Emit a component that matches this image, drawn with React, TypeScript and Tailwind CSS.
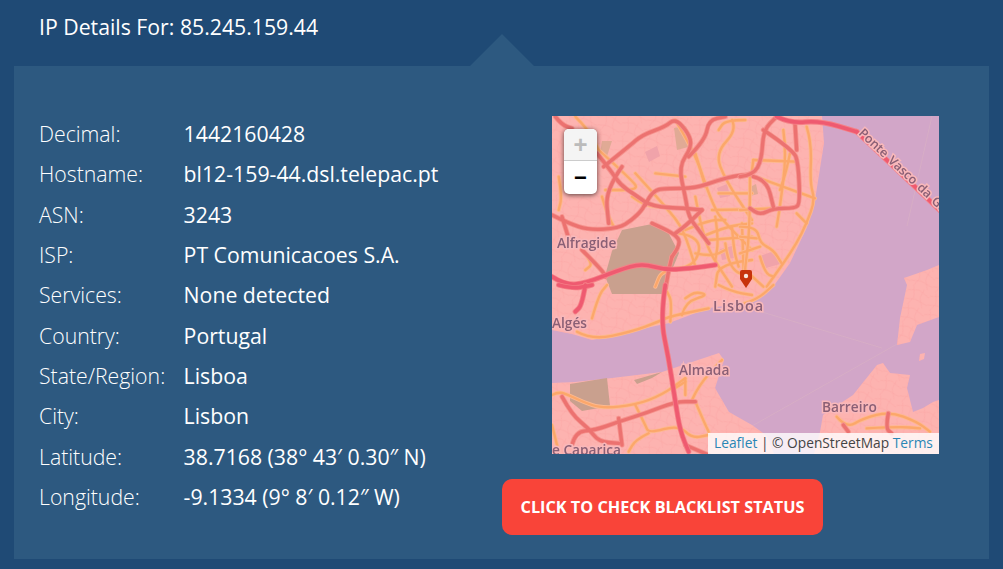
const rows = [
  ['Decimal:', '1442160428'],
  ['Hostname:', 'bl12-159-44.dsl.telepac.pt'],
  ['ASN:', '3243'],
  ['ISP:', 'PT Comunicacoes S.A.'],
  ['Services:', 'None detected'],
  ['Country:', 'Portugal'],
  ['State/Region:', 'Lisboa'],
  ['City:', 'Lisbon'],
  ['Latitude:', '38.7168 (38° 43′ 0.30″ N)'],
  ['Longitude:', '-9.1334 (9° 8′ 0.12″ W)'],
];

// turns a list of points into a rounded line
function smooth(p: number[][]) {
  let d = `M${p[0][0]} ${p[0][1]}`;
  for (let i = 1; i < p.length - 1; i++) {
    const mx = (p[i][0] + p[i + 1][0]) / 2;
    const my = (p[i][1] + p[i + 1][1]) / 2;
    d += `Q${p[i][0]} ${p[i][1]} ${mx} ${my}`;
  }
  const last = p[p.length - 1];
  return d + `L${last[0]} ${last[1]}`;
}

type Roads = number[][][];

function RoadLayer({ roads, color, casing, width }: { roads: Roads; color: string; casing: string; width: number }) {
  return (
    <>
      {roads.map((r, i) => (
        <path key={'c' + i} d={smooth(r)} fill="none" stroke={casing} strokeWidth={width + 5} strokeLinecap="round" strokeLinejoin="round" />
      ))}
      {roads.map((r, i) => (
        <path key={i} d={smooth(r)} fill="none" stroke={color} strokeWidth={width} strokeLinecap="round" strokeLinejoin="round" />
      ))}
    </>
  );
}

function Quarter({ x, y, orange, red, pink }: { x: number; y: number; orange: Roads; red: Roads; pink: Roads }) {
  return (
    <g transform={`translate(${x},${y}) scale(0.3333)`}>
      <RoadLayer roads={orange} color="#fca76a" casing="#fdb98f" width={7} />
      <RoadLayer roads={red} color="#ec7270" casing="#f6938e" width={10} />
      <RoadLayer roads={pink} color="#ef5a70" casing="#f57f86" width={11} />
    </g>
  );
}

// road lists are in the 3x scale of each map quarter
const orangeNW: Roads = [
  [[430, 130], [480, 290], [530, 350], [600, 420]],
  [[540, 30], [555, 60], [490, 130], [520, 210], [600, 330]],
  [[450, 380], [520, 350], [600, 340]],
  [[480, 300], [600, 298]],
  [[430, 260], [445, 340], [470, 420], [500, 470], [540, 530]],
  [[140, 120], [240, 210], [260, 240], [160, 240]],
  [[310, 190], [400, 200]],
  [[250, 190], [350, 300], [395, 360], [430, 470]],
  [[380, 370], [450, 380], [430, 470], [330, 480], [310, 530]],
  [[600, 450], [500, 460], [490, 530]],
  [[570, 340], [575, 480]],
  [[90, 420], [125, 460], [100, 480]],
  [[20, 200], [30, 260], [20, 300]],
  [[240, 260], [280, 290], [350, 290]],
  [[70, 20], [110, 60], [140, 120]],
  [[370, 30], [430, 130], [460, 230]],
  [[400, 360], [470, 330], [520, 330]],
  [[470, 390], [600, 380]],
  [[500, 250], [600, 250]],
  [[150, 260], [165, 310], [185, 350]],
  [[520, 400], [530, 480], [600, 500]],
  [[430, 430], [480, 440], [520, 420]],
  [[580, 30], [520, 30], [500, 60]],
  [[540, 350], [545, 420], [560, 470]],
  [[490, 320], [500, 390], [490, 450]],
];
const redNW: Roads = [
  [[10, 20], [30, 45], [60, 55]],
  [[135, 130], [175, 180], [205, 225], [250, 255], [300, 290], [400, 295], [450, 300]],
  [[155, 170], [230, 110], [270, 75], [340, 50], [370, 25], [410, 70], [420, 110], [380, 170], [400, 260], [410, 320], [440, 360], [470, 400]],
  [[410, 140], [460, 90], [470, 30], [520, 20]],
  [[280, 285], [300, 240], [350, 235], [430, 235], [500, 210], [560, 195], [600, 195]],
  [[0, 315], [50, 340], [110, 360], [200, 355], [240, 330], [270, 300], [280, 280]],
  [[30, 320], [50, 385]],
  [[90, 420], [150, 480], [160, 500]],
  [[210, 170], [160, 240], [170, 340]],
  [[360, 440], [390, 400], [365, 370], [300, 340]],
  [[340, 540], [350, 480], [360, 440]],
  [[450, 300], [410, 340], [370, 370]],
];
const pinkNW: Roads = [[[0, 500], [40, 525], [100, 520], [200, 480], [270, 460], [340, 480], [420, 475], [490, 465]]];

const orangeNE: Roads = [
  [[40, 150], [170, 155]],
  [[30, 200], [30, 350], [15, 480]],
  [[60, 205], [225, 265]],
  [[200, 50], [215, 100], [210, 220], [225, 270], [200, 340], [170, 400], [130, 460], [80, 530]],
  [[170, 310], [200, 340]],
  [[130, 60], [140, 130], [120, 290], [110, 350]],
  [[0, 350], [50, 350], [60, 400], [100, 420], [125, 460]],
  [[0, 380], [50, 385]],
  [[0, 300], [100, 295]],
  [[60, 440], [75, 490], [100, 500]],
  [[150, 130], [140, 180], [120, 240]],
  [[0, 430], [60, 410]],
  [[15, 480], [70, 530]],
  [[40, 150], [35, 190]],
];
const redNE: Roads = [
  [[0, 200], [40, 195], [65, 150], [70, 60], [110, 20]],
  [[70, 60], [160, 120], [175, 160], [180, 280], [165, 295], [100, 295], [60, 315], [30, 295]],
  [[40, 200], [80, 210], [100, 290]],
  [[165, 40], [170, 120]],
];
const pinkNE: Roads = [
  [[110, 20], [150, 40], [240, 32], [350, 65]],
  [[350, 65], [620, 320]],
];

const orangeSW: Roads = [
  [[0, 330], [20, 320], [50, 330], [90, 350], [150, 370], [250, 360], [330, 330], [400, 280]],
  [[360, 315], [400, 290]],
  [[250, 360], [280, 420], [290, 445], [380, 420], [420, 460], [470, 450]],
  [[430, 350], [460, 420], [470, 440]],
  [[420, 345], [440, 300], [510, 225]],
  [[400, 330], [400, 280]],
  [[75, 140], [120, 165], [240, 140], [320, 110], [350, 95], [470, 70]],
  [[390, 90], [400, 50], [470, 30], [430, 20], [400, 40]],
  [[120, 100], [140, 30], [165, 0]],
  [[290, 445], [250, 465], [230, 500]],
  [[0, 420], [20, 500]],
  [[355, 110], [360, 50], [345, 20]],
  [[500, 0], [540, 20], [600, 30]],
];
const redSW: Roads = [
  [[30, 335], [60, 390], [110, 430], [140, 470], [200, 475]],
  [[60, 480], [70, 440], [130, 435], [200, 410], [280, 385], [370, 350], [430, 350]],
  [[200, 400], [210, 480]],
  [[400, 480], [470, 510]],
];
const pinkSW: Roads = [
  [[340, 0], [325, 100], [350, 220], [370, 350], [385, 440], [410, 500]],
  [[100, 0], [90, 60], [70, 80]],
  [[20, 0], [60, 10], [100, 5], [120, 0]],
];

const orangeSE: Roads = [
  [[290, 395], [320, 430], [370, 400], [450, 380], [530, 410], [570, 440]],
  [[380, 430], [480, 425], [540, 430]],
  [[0, 60], [50, 45], [100, 0]],
];
const redSE: Roads = [[[445, 385], [437, 430], [455, 445]], [[310, 420], [325, 440]]];

const mapLabel = 'font-semibold fill-[#8a5f75] [paint-order:stroke] stroke-[#f9b8ba] [font-family:"Open_Sans",sans-serif]';

const landShapes = [
  'M0 0H270L272 27L263 84L255 111L238 147L221 171L201 186L157 192L117 207L40 224L20 218L0 214Z',
  'M0 267L23 266L60 262L110 256L140 246L167 237L172 244L163 272L177 296L200 309L215 320L222 338H0Z',
  'M268 316L271 299L301 279L325 249L331 247L338 257L358 259L355 272L361 296L371 292L381 286L387 284V338H262Z',
  'M355 169L352 162L375 154L387 149V201L365 209L358 226L345 229L348 202Z',
  'M368 238L373 237L372 243L367 245Z',
];

function LisbonMap() {
  return (
    <svg viewBox="0 0 387 338" className="block h-full w-full">
      <defs>
        {/* fine street texture over the land */}
        <pattern id="streets" width="23" height="19" patternUnits="userSpaceOnUse" patternTransform="rotate(17)">
          <path d="M0 5L11 2L23 7M5 0L8 10L4 19M16 0L14 9L19 19M0 14L10 12L23 15" fill="none" stroke="#fba7a6" strokeWidth="0.6" />
        </pattern>
      </defs>
      <rect width="387" height="338" fill="#d2a6c8" />
      <g className="blur-[0.4px]">
        <path d="M190 190L330 232M200 310L345 228M355 110L380 0" fill="none" stroke="#d9b0c4" strokeWidth="0.7" />
        <g fill="#fdb3b0">
          {landShapes.map((d) => (
            <path key={d} d={d} />
          ))}
        </g>
        <g fill="url(#streets)">
          {landShapes.map((d) => (
            <path key={d} d={d} />
          ))}
        </g>
        {/* park and built up patches */}
        <g fill="#c9a08e">
          <path d="M70 114L100 108L117 118L127 137L117 161L113 178L60 178L53 160L60 135Z" />
          <path d="M18 268L55 262L58 290L30 295L18 285Z" />
          <path d="M82 264L110 256L100 262L85 268Z" />
        </g>
        <g fill="#f0a3aa">
          <path d="M93 36L105 30L108 40L97 46Z" />
          <path d="M165 72L175 68L178 80L168 82Z" />
          <path d="M168 133L180 130L182 142L170 144Z" />
          <path d="M208 140L222 135L228 148L214 152Z" />
        </g>
        <g fill="#e0aa95">
          <path d="M122 12L134 10L140 30L125 34Z" />
          <path d="M50 25L60 25L55 40L48 38Z" />
          <path d="M196 72L204 68L206 78L198 80Z" />
        </g>

        <Quarter x={0} y={-6} orange={orangeNW} red={redNW} pink={pinkNW} />
        <Quarter x={188} y={-6} orange={orangeNE} red={redNE} pink={pinkNE} />
        <Quarter x={0} y={169} orange={orangeSW} red={redSW} pink={pinkSW} />
        <Quarter x={188} y={169} orange={orangeSE} red={redSE} pink={[]} />

        <text x="5" y="132" fontSize="13.7" strokeWidth="3" className={mapLabel}>Alfragide</text>
        <text x="161" y="195" fontSize="14.5" strokeWidth="3" letterSpacing="1" className={mapLabel + ' font-bold'}>Lisboa</text>
        <text x="0" y="212" fontSize="13.7" strokeWidth="3" className={mapLabel}>Algés</text>
        <text x="127" y="259" fontSize="13.7" strokeWidth="3" className={mapLabel}>Almada</text>
        <text x="270" y="296" fontSize="13.7" strokeWidth="3" className={mapLabel}>Barreiro</text>
        <text x="0" y="339" fontSize="13.7" strokeWidth="3" className={mapLabel}>e Caparica</text>
        <text x="306" y="18" fontSize="12.5" strokeWidth="3" wordSpacing="1.5" transform="rotate(43 306 18)" className={mapLabel}>Ponte Vasco da Gama</text>
      </g>

      {/* marker */}
      <path d="M188 156Q188 154 190 154H198Q200 154 200 156V163L194 172L188 163Z" fill="#c7330c" />
      <circle cx="194" cy="160" r="2.2" fill="#f6e6dc" />
    </svg>
  );
}

export default function App() {
  return (
    <div className="h-[569px] overflow-hidden bg-[#1f4a75] text-white [font-family:'Open_Sans',sans-serif]">
      <h2 className="h-[66px] pl-[39px] pt-[12px] text-[21.25px] leading-[30px] font-normal">IP Details For: 85.245.159.44</h2>
      <div className="relative ml-[14px] flex h-[493px] w-[975px] bg-[#2d5980]">
        <div className="absolute left-[456px] top-[-32px] h-[32px] w-[64px] bg-[#2d5980] [clip-path:polygon(50%_0,100%_100%,0_100%)]" />
        <div className="w-[488px] pl-[25px] pt-[47.7px]">
          {rows.map(([label, value]) => (
            <div key={label} className="flex h-[40.35px] items-center text-[21.25px]">
              <span className="w-[144.6px] shrink-0 font-light">{label}</span>
              <span>{value}</span>
            </div>
          ))}
        </div>
        <div className="pt-[50px]">
          <div className="relative ml-[50px] h-[338px] w-[387px] overflow-hidden">
            <LisbonMap />
            <div className="absolute left-[12px] top-[13px] w-[33px] overflow-hidden rounded-[5px] bg-white shadow-[0_1px_5px_rgba(0,0,0,0.65)]">
              <div className="flex h-[32px] items-center justify-center border-b border-[#ccc] bg-[#f4f4f4] text-[24px] font-bold text-[#bbb] [font-family:'Liberation_Sans',sans-serif]">+</div>
              <div className="flex h-[33px] items-center justify-center text-[22px] font-bold text-black [font-family:'Liberation_Sans',sans-serif]">−</div>
            </div>
            <div className="absolute bottom-0 right-0 flex h-[21px] w-[231px] items-center justify-center whitespace-nowrap bg-white/80 text-[13.75px] text-[#444]">
              <span className="text-[#2a86b5]">Leaflet</span>
              <span className="whitespace-pre"> | © OpenStreetMap </span>
              <span className="text-[#2a86b5]">Terms</span>
            </div>
          </div>
          <button className="mt-[25px] h-[56px] w-[321px] rounded-[10px] bg-[#f94439] text-[16.25px] font-bold text-white uppercase">
            Click to check blacklist status
          </button>
        </div>
      </div>
    </div>
  );
}
